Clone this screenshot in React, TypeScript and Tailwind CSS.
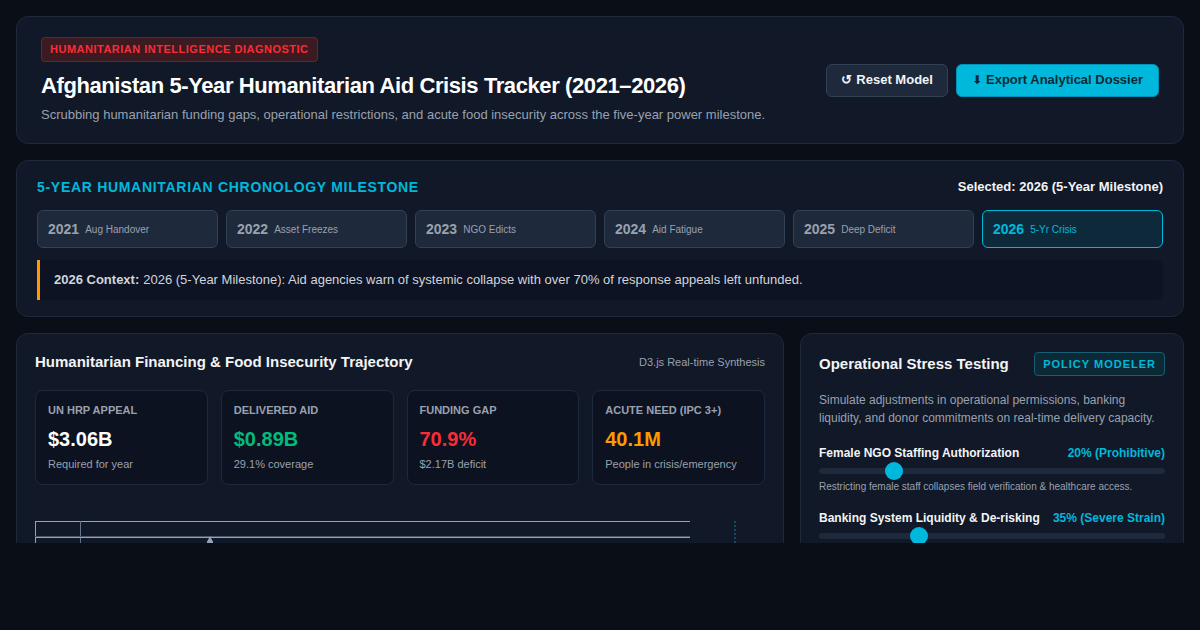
const years = [
  { y: '2021', label: 'Aug Handover' },
  { y: '2022', label: 'Asset Freezes' },
  { y: '2023', label: 'NGO Edicts' },
  { y: '2024', label: 'Aid Fatigue' },
  { y: '2025', label: 'Deep Deficit' },
  { y: '2026', label: '5-Yr Crisis', active: true },
];

const kpis = [
  { title: 'UN HRP APPEAL', value: '$3.06B', sub: 'Required for year', color: 'text-white' },
  { title: 'DELIVERED AID', value: '$0.89B', sub: '29.1% coverage', color: 'text-emerald-500' },
  { title: 'FUNDING GAP', value: '70.9%', sub: '$2.17B deficit', color: 'text-red-500' },
  { title: 'ACUTE NEED (IPC 3+)', value: '40.1M', sub: 'People in crisis/emergency', color: 'text-amber-500' },
];

const sliders = [
  {
    label: 'Female NGO Staffing Authorization',
    value: '20% (Prohibitive)',
    pos: 0.2,
    help: 'Restricting female staff collapses field verification & healthcare access.',
  },
  {
    label: 'Banking System Liquidity & De-risking',
    value: '35% (Severe Strain)',
    pos: 0.278,
    help: 'Cash shortages force reliance on informal hawala transfer networks.',
  },
];

function Slider({ label, value, pos, help }: { label: string; value: string; pos: number; help: string }) {
  return (
    <div className="mb-4">
      <div className="flex items-center justify-between leading-4">
        <span className="text-[12px] font-bold text-gray-100">{label}</span>
        <span className="text-[12px] font-bold text-cyan-500">{value}</span>
      </div>
      <div className="relative mt-[7px] h-[6px] rounded-full bg-[#1e293b]">
        <div
          className="absolute top-1/2 h-[18px] w-[18px] -translate-x-1/2 -translate-y-1/2 rounded-full bg-cyan-500"
          style={{ left: `calc(9px + ${pos} * (100% - 18px))` }}
        />
      </div>
      <p className="mt-[6px] text-[10px] leading-[14px] text-gray-400">{help}</p>
    </div>
  );
}

export default function App() {
  return (
    <div className="h-[630px] w-[1200px] bg-[#0a0e17] font-['Liberation_Sans',Arial,sans-serif] text-white">
      <div className="h-[543px] overflow-hidden p-4">
        {/* Header */}
        <header className="flex items-center justify-between rounded-xl border border-[#1e293b] bg-[#111827] px-6 pb-[19px] pt-[19px]">
          <div>
            <span className="inline-block rounded border border-[#7f1d1d] bg-[#3b1a21] px-2 py-[5px] text-[11px] font-bold leading-[13px] tracking-[0.5px] text-red-500">
              HUMANITARIAN INTELLIGENCE DIAGNOSTIC
            </span>
            <h1 className="mt-[10px] text-[22px] font-bold leading-[28px] tracking-[-0.4px] text-white">
              Afghanistan 5-Year Humanitarian Aid Crisis Tracker (2021–2026)
            </h1>
            <p className="mt-[6px] text-[13px] leading-[18px] text-gray-400">
              Scrubbing humanitarian funding gaps, operational restrictions, and acute food insecurity across the five-year power milestone.
            </p>
          </div>
          <div className="flex gap-2">
            <button className="flex h-[33px] items-center rounded-md border border-[#334155] bg-[#1e293b] px-[14px] text-[13px] font-bold text-gray-100">
              <span className="mr-1">↺</span>Reset Model
            </button>
            <button className="flex h-[33px] items-center rounded-md border border-cyan-600 bg-cyan-500 px-[15px] text-[13px] font-bold text-[#0f2a33]">
              <span className="mr-1 font-['DejaVu_Sans',sans-serif] text-[12px]">⬇</span>Export Analytical Dossier
            </button>
          </div>
        </header>

        {/* Chronology */}
        <section className="mt-4 rounded-xl border border-[#1e293b] bg-[#111827] px-5 pb-4 pt-4">
          <div className="flex items-center justify-between leading-5">
            <h2 className="text-[14px] font-bold tracking-[0.7px] text-cyan-500">5-YEAR HUMANITARIAN CHRONOLOGY MILESTONE</h2>
            <span className="text-[13px] font-bold text-gray-100">Selected: 2026 (5-Year Milestone)</span>
          </div>
          <div className="mt-[13px] grid grid-cols-6 gap-2">
            {years.map((t) => (
              <div
                key={t.y}
                className={`flex h-[38px] items-center gap-[6px] rounded-md border px-[10px] ${
                  t.active ? 'border-cyan-500 bg-[#0e2a3a] text-cyan-500' : 'border-[#334155] bg-[#1e293b] text-gray-400'
                }`}
              >
                <span className="text-[14px] font-bold">{t.y}</span>
                <span className="text-[10px]">{t.label}</span>
              </div>
            ))}
          </div>
          <div className="mt-3 flex h-[40px] items-center rounded-r-md border-l-[3px] border-amber-500 bg-[#0d1322] pl-[14px] text-[13px] text-gray-300">
            <b className="mr-1 font-bold">2026 Context:</b> 2026 (5-Year Milestone): Aid agencies warn of systemic collapse with over 70% of response appeals left unfunded.
          </div>
        </section>

        {/* Bottom row */}
        <div className="mt-4 flex gap-4">
          <section className="h-[400px] w-[768px] rounded-xl border border-[#1e293b] bg-[#111827] p-[18px]">
            <div className="flex items-center justify-between leading-5">
              <h3 className="text-[15px] font-bold text-gray-100">Humanitarian Financing &amp; Food Insecurity Trajectory</h3>
              <span className="text-[11px] text-gray-400">D3.js Real-time Synthesis</span>
            </div>
            <div className="mt-[18px] grid grid-cols-4 gap-[13px]">
              {kpis.map((k) => (
                <div key={k.title} className="h-[95px] rounded-lg border border-[#1e293b] bg-[#0c1220] px-3 pt-[12px]">
                  <div className="text-[11px] font-bold leading-[14px] text-gray-400">{k.title}</div>
                  <div className={`mt-[10px] text-[20px] font-bold leading-6 ${k.color}`}>{k.value}</div>
                  <div className="mt-[6px] text-[11px] leading-[14px] text-gray-400">{k.sub}</div>
                </div>
              ))}
            </div>
            <svg className="mt-[36px] block" width="730" height="120" viewBox="0 0 730 120">
              <line x1="0.5" y1="0" x2="0.5" y2="120" stroke="#94a3b8" strokeWidth="1" />
              <line x1="0" y1="0.5" x2="655" y2="0.5" stroke="#94a3b8" strokeWidth="1" />
              <line x1="45.5" y1="0" x2="45.5" y2="120" stroke="#64748b" strokeWidth="1" />
              <line x1="0" y1="15.5" x2="655" y2="15.5" stroke="#475569" strokeWidth="1" />
              <line x1="0" y1="16.5" x2="655" y2="16.5" stroke="#94a3b8" strokeWidth="1" />
              <line x1="700" y1="0" x2="700" y2="120" stroke="#155e75" strokeWidth="1.5" strokeDasharray="2 2" />
              <path d="M172 21 L175 15 L178 21 Z" fill="#94a3b8" />
              <circle cx="175" cy="22" r="3" fill="#94a3b8" />
            </svg>
          </section>

          <section className="h-[400px] w-[384px] rounded-xl border border-[#1e293b] bg-[#111827] p-[18px]">
            <div className="flex h-6 items-center justify-between">
              <h3 className="text-[15px] font-bold text-gray-100">Operational Stress Testing</h3>
              <span className="rounded border border-[#155e75] bg-[#0c2a36] px-2 py-[4px] text-[11px] font-bold leading-[14px] tracking-[1px] text-cyan-500">
                POLICY MODELER
              </span>
            </div>
            <p className="mt-[15px] text-[12px] leading-[18px] text-gray-400">
              Simulate adjustments in operational permissions, banking liquidity, and donor commitments on real-time delivery capacity.
            </p>
            <div className="mt-[18px]">
              {sliders.map((s) => (
                <Slider key={s.label} {...s} />
              ))}
            </div>
          </section>
        </div>
      </div>
    </div>
  );
}
